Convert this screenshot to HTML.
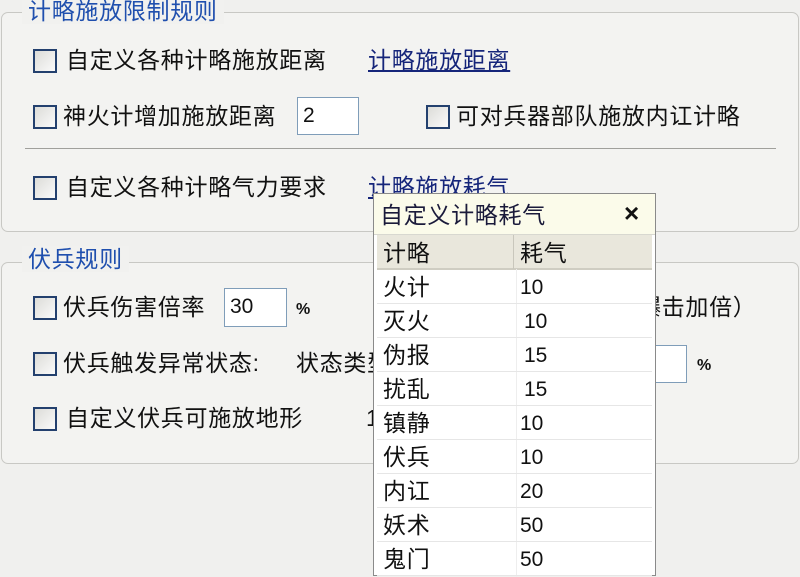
<!DOCTYPE html>
<html><head><meta charset="utf-8"><style>
body{margin:0;width:800px;height:576px;background:#f0f0ee;position:relative;overflow:hidden;font-family:"Liberation Sans","Noto Sans CJK SC",sans-serif;font-size:23px;letter-spacing:0.7px;color:#111}
.a{position:absolute;white-space:nowrap;line-height:26px}
.n{letter-spacing:0;font-size:21px}
.grp{position:absolute;border:1px solid #c8c8c4;border-radius:7px;background:#f3f3f1}
.leg{position:absolute;background:#f1f1ef;color:#1f4fae;padding:0 6px;line-height:26px}
.cb{position:absolute;width:20px;height:20px;border:2px solid #23406e;background:linear-gradient(135deg,#dcdcd8,#fafafa)}
.inp{position:absolute;background:#fff;border:1px solid #7f9db9;line-height:36px;padding-left:5px;box-sizing:border-box;letter-spacing:0;font-size:21px}
.lnk{color:#15257a;text-decoration:underline}
.pop{position:absolute;left:373px;top:193px;width:283px;height:383px;background:#fff;border:1px solid #8a8a8a;box-sizing:border-box}
.row{position:absolute;left:3px;right:3px;height:34px;border-bottom:1px solid #e6e6e6}
.pc{position:absolute;font-size:16px;font-weight:bold;letter-spacing:0}
</style></head><body>
<div class="grp" style="left:1px;top:12px;width:796px;height:218px"></div>
<div class="leg" style="left:22px;top:-2px">计略施放限制规则</div>
<div class="cb" style="left:33px;top:49px"></div><div class="a" style="left:66px;top:47px">自定义各种计略施放距离</div>
<div class="a lnk" style="left:368px;top:47px">计略施放距离</div>
<div class="cb" style="left:33px;top:105px"></div><div class="a" style="left:63px;top:103px">神火计增加施放距离</div>
<div class="inp" style="left:297px;top:97px;width:62px;height:38px">2</div>
<div class="cb" style="left:426px;top:105px"></div><div class="a" style="left:456px;top:103px">可对兵器部队施放内讧计略</div>
<div style="position:absolute;left:25px;top:148px;width:751px;height:1px;background:#a0a09c"></div>
<div class="cb" style="left:33px;top:176px"></div><div class="a" style="left:66px;top:174px">自定义各种计略气力要求</div>
<div class="a lnk" style="left:368px;top:174px">计略施放耗气</div>

<div class="grp" style="left:1px;top:262px;width:796px;height:200px"></div>
<div class="leg" style="left:22px;top:246px">伏兵规则</div>
<div class="cb" style="left:33px;top:296px"></div><div class="a" style="left:63px;top:294px">伏兵伤害倍率</div>
<div class="inp" style="left:224px;top:288px;width:63px;height:39px">30</div>
<div class="a pc" style="left:296px;top:297px">%</div>
<div class="a" style="left:638px;top:294px">爆击加倍）</div>
<div class="cb" style="left:33px;top:352px"></div><div class="a" style="left:63px;top:350px">伏兵触发异常状态:</div>
<div class="a" style="left:296px;top:350px">状态类型</div>
<div class="inp" style="left:620px;top:345px;width:67px;height:38px"></div>
<div class="a pc" style="left:697px;top:353px">%</div>
<div class="cb" style="left:33px;top:407px"></div><div class="a" style="left:66px;top:405px">自定义伏兵可施放地形</div>
<div class="a" style="left:366px;top:405px">1</div>

<div class="pop">
<div style="position:absolute;left:0;right:0;top:0;height:40px;background:#fbfbea;border-bottom:1px solid #d8d8d0"></div>
<div class="a" style="left:6px;top:8px;color:#1a1a3a">自定义计略耗气</div>
<div class="a" style="left:250px;top:6px;font-size:26px;font-weight:bold">×</div>
<div style="position:absolute;left:3px;right:3px;top:41px;height:33px;background:#e9e7dc;border-bottom:2px solid #cfcdc2"></div>
<div style="position:absolute;left:139px;top:41px;width:1px;height:34px;background:#c9c7bc"></div>
<div class="a" style="left:9px;top:46px">计略</div><div class="a" style="left:146px;top:46px">耗气</div>
<div style="position:absolute;left:142px;top:75px;width:1px;height:308px;background:#eee"></div>
<div class="row" style="top:75px"></div><div class="a" style="left:9px;top:80px">火计</div><div class="a n" style="left:146px;top:81px">10</div>
<div class="row" style="top:109px"></div><div class="a" style="left:9px;top:114px">灭火</div><div class="a n" style="left:150px;top:115px">10</div>
<div class="row" style="top:143px"></div><div class="a" style="left:9px;top:148px">伪报</div><div class="a n" style="left:150px;top:149px">15</div>
<div class="row" style="top:177px"></div><div class="a" style="left:9px;top:182px">扰乱</div><div class="a n" style="left:150px;top:183px">15</div>
<div class="row" style="top:211px"></div><div class="a" style="left:9px;top:216px">镇静</div><div class="a n" style="left:146px;top:217px">10</div>
<div class="row" style="top:245px"></div><div class="a" style="left:9px;top:250px">伏兵</div><div class="a n" style="left:146px;top:251px">10</div>
<div class="row" style="top:279px"></div><div class="a" style="left:9px;top:284px">内讧</div><div class="a n" style="left:146px;top:285px">20</div>
<div class="row" style="top:313px"></div><div class="a" style="left:9px;top:318px">妖术</div><div class="a n" style="left:146px;top:319px">50</div>
<div class="row" style="top:347px"></div><div class="a" style="left:9px;top:352px">鬼门</div><div class="a n" style="left:146px;top:353px">50</div>
</div>
</body></html>
